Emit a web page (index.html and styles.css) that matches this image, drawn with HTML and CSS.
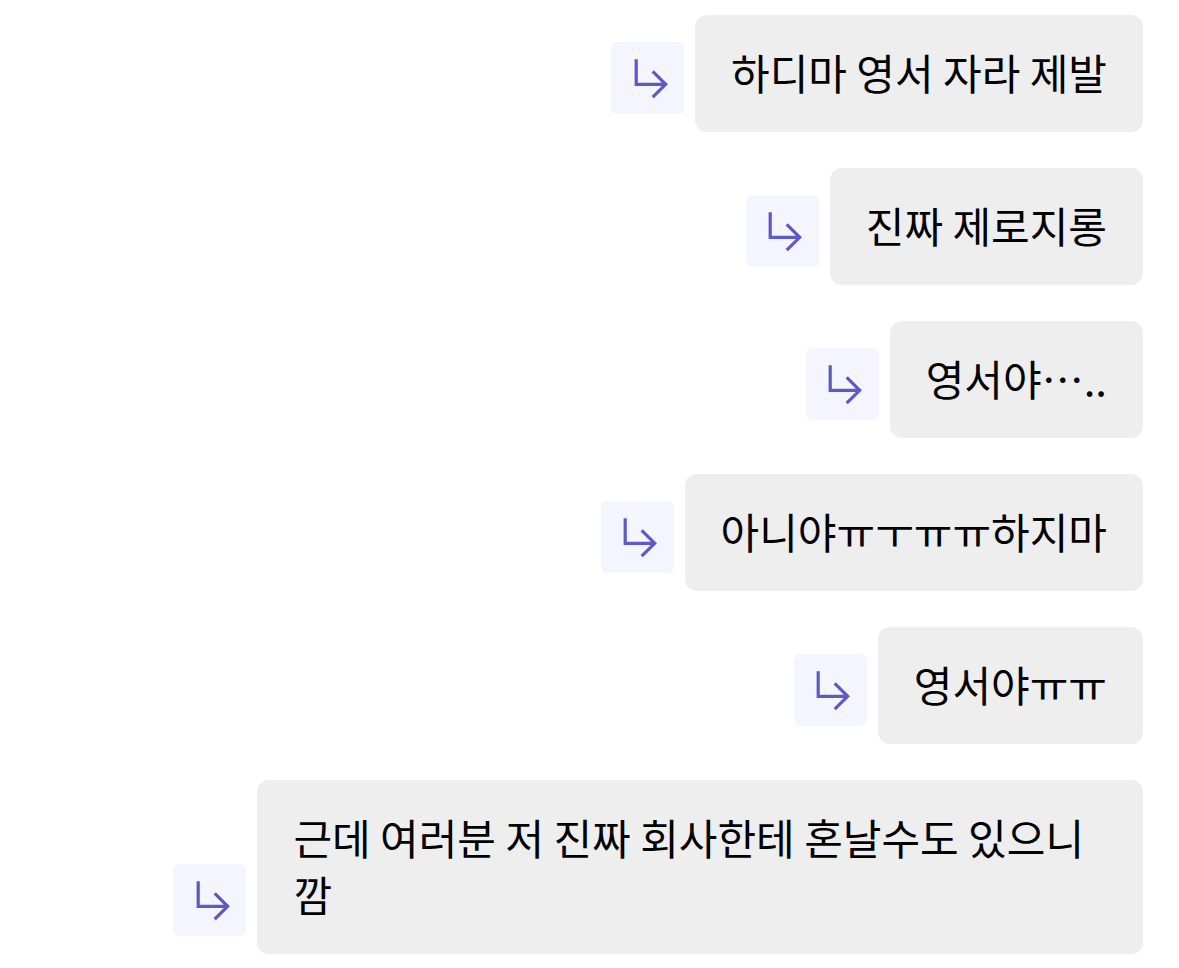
FILE: index.html
```html
<!DOCTYPE html>
<html lang="ko">
<head>
<meta charset="utf-8">
<meta name="viewport" content="width=device-width, initial-scale=1">
<title>메시지</title>
<link rel="stylesheet" href="styles.css">
</head>
<body>
<svg class="sprite" aria-hidden="true">
<symbol id="reply" viewBox="0 0 72 72"><path d="M24.2 17.3v25h29.5M40.7 29.4l13 12.9-13 12.9"/></symbol>
</svg>
<main class="chat">
<div class="row"><button class="reply" type="button" aria-label="답장"><svg class="icon"><use href="#reply"/></svg></button><p class="bubble">하디마 영서 자라 제발</p></div>
<div class="row"><button class="reply" type="button" aria-label="답장"><svg class="icon"><use href="#reply"/></svg></button><p class="bubble">진짜 제로지롱</p></div>
<div class="row"><button class="reply" type="button" aria-label="답장"><svg class="icon"><use href="#reply"/></svg></button><p class="bubble">영서야…..</p></div>
<div class="row"><button class="reply" type="button" aria-label="답장"><svg class="icon"><use href="#reply"/></svg></button><p class="bubble">아니야ㅠㅜㅠㅠ하지마</p></div>
<div class="row"><button class="reply" type="button" aria-label="답장"><svg class="icon"><use href="#reply"/></svg></button><p class="bubble">영서야ㅠㅠ</p></div>
<div class="row"><button class="reply" type="button" aria-label="답장"><svg class="icon"><use href="#reply"/></svg></button><p class="bubble">근데 여러분 저 진짜 회사한테 혼날수도 있으니깜</p></div>
</main>
</body>
</html>
```
FILE: styles.css
```css
body {
  margin: 0;
  background: #fff;
  color: #000;
  font-family: "Noto Sans CJK JP", "Noto Sans CJK KR", sans-serif;
  font-feature-settings: "locl" 0;
}

.sprite {
  position: absolute;
  width: 0;
  height: 0;
}

.chat {
  display: flex;
  flex-direction: column;
  gap: 36px;
  padding: 15px 36px 14px;
}

.row {
  display: flex;
  justify-content: flex-end;
  align-items: flex-end;
  gap: 11px;
}

.bubble {
  box-sizing: border-box;
  max-width: 80%;
  margin: 0;
  padding: 28px 36px 32px;
  border-radius: 12px;
  background: #eee;
  font-size: 42px;
  line-height: 57px;
}

.reply {
  display: flex;
  flex: none;
  align-items: center;
  justify-content: center;
  width: 73px;
  height: 72px;
  margin: 0 0 18px;
  padding: 0;
  border: 0;
  border-radius: 6px;
  background: #f4f5ff;
  color: #5d59c6;
}

.icon {
  width: 72px;
  height: 72px;
  fill: none;
  stroke: currentColor;
  stroke-width: 3.2;
}
```
